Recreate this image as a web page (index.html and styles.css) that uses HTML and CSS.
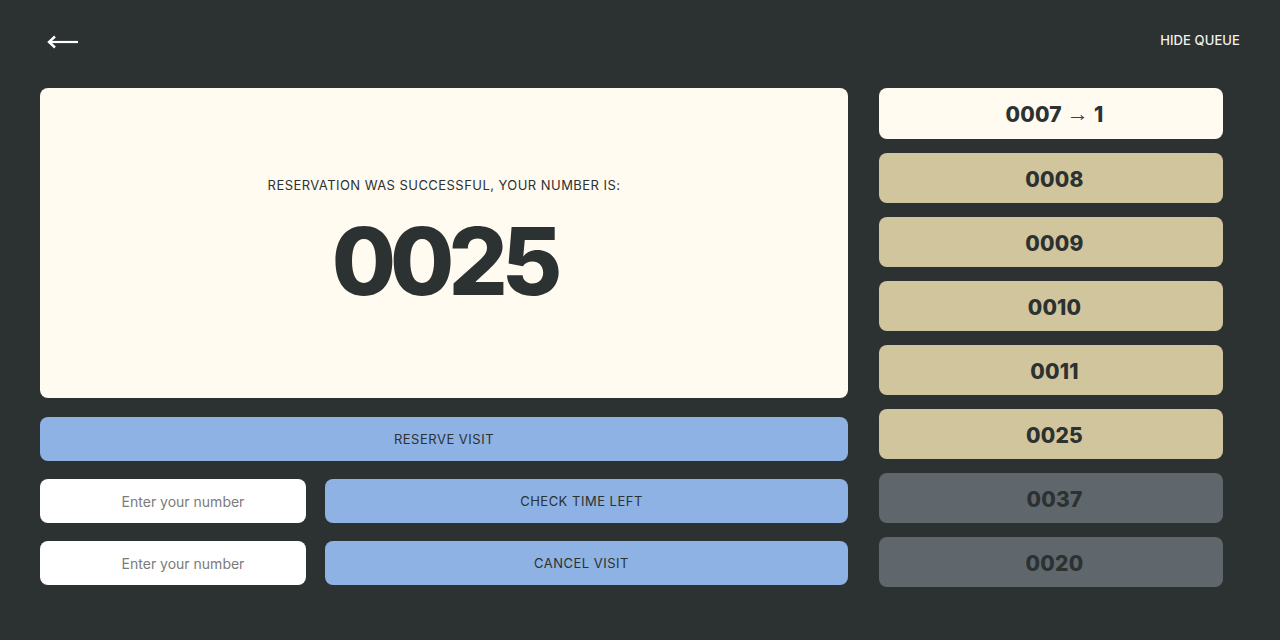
FILE: index.html
```html
<!DOCTYPE html>
<html lang="en">
<head>
<meta charset="utf-8">
<title>Queue</title>
<link rel="stylesheet" href="styles.css">
</head>
<body>
<header class="topbar">
  <button class="back" aria-label="Back">
    <svg width="32" height="14" viewBox="0 0 32 14"><path d="M2 7 H31" stroke="#fff" stroke-width="2.2" fill="none"/><path d="M8 1.5 L2 7 L8 12.5" stroke="#fff" stroke-width="2.4" fill="none" stroke-linejoin="miter"/></svg>
  </button>
  <button class="hide">HIDE QUEUE</button>
</header>
<main class="layout">
  <section class="left">
    <div class="card">
      <p class="label">RESERVATION WAS SUCCESSFUL, YOUR NUMBER IS:</p>
      <p class="big">0025</p>
    </div>
    <button class="btn full">RESERVE VISIT</button>
    <div class="row">
      <input class="field" placeholder="Enter your number">
      <button class="btn side">CHECK TIME LEFT</button>
    </div>
    <div class="row">
      <input class="field" placeholder="Enter your number">
      <button class="btn side">CANCEL VISIT</button>
    </div>
  </section>
  <aside class="queue">
    <div class="item current first">0007 <span class="arr">→</span> 1</div>
    <div class="item tan">0008</div>
    <div class="item tan">0009</div>
    <div class="item tan">0010</div>
    <div class="item tan">0011</div>
    <div class="item tan">0025</div>
    <div class="item gray">0037</div>
    <div class="item gray">0020</div>
  </aside>
</main>
</body>
</html>
```
FILE: styles.css
```css
* { box-sizing: border-box; }
html, body { margin: 0; }
body {
  background: #2c3131;
  font-family: Inter, "Noto Sans", sans-serif;
  color: #2c3131;
  width: 1280px;
  height: 640px;
  overflow: hidden;
}
.topbar {
  height: 88px;
  display: flex;
  justify-content: space-between;
  align-items: flex-start;
  padding: 0 40px 0 47px;
}
.back {
  background: none;
  border: 0;
  padding: 0;
  margin-top: 35px;
  cursor: pointer;
}
.back svg { display: block; }
.hide {
  background: none;
  border: 0;
  padding: 0;
  margin-top: 32px;
  color: #f3f3ee;
  font-family: Inter, sans-serif;
  font-size: 13px;
  font-weight: 500;
  letter-spacing: 0.1px;
}
.layout {
  display: grid;
  grid-template-columns: 808px 344px;
  column-gap: 31px;
  padding-left: 40px;
}
.left {
  display: flex;
  flex-direction: column;
}
.card {
  height: 310px;
  background: #fffbf1;
  border-radius: 8px;
  display: flex;
  flex-direction: column;
  align-items: center;
  padding-top: 89px;
}
.label {
  margin: 0;
  font-size: 13px;
  font-weight: 400;
  letter-spacing: 0.45px;
  color: #2c3131;
}
.big {
  margin: 14px 0 0;
  font-size: 93px;
  line-height: 108px;
  font-weight: 800;
  letter-spacing: -6px;
  color: #2c3131;
}
.btn {
  height: 44px;
  border: 0;
  border-radius: 8px;
  background: #8eb2e3;
  color: #2c3131;
  font-family: Inter, sans-serif;
  font-size: 13px;
  letter-spacing: 0.5px;
}
.side { padding: 0 10px 0 0; }
.full { margin-top: 19px; }
.row {
  display: grid;
  grid-template-columns: 266px 523px;
  column-gap: 19px;
  margin-top: 18px;
}
.field {
  height: 44px;
  border: 0;
  border-radius: 8px;
  background: #ffffff;
  text-align: center;
  padding: 0 0 0 20px;
  font-family: Inter, sans-serif;
  font-size: 14px;
  color: #2c3131;
}
.field::placeholder { color: #7b7b7b; }
.queue {
  display: flex;
  flex-direction: column;
  gap: 14px;
}
.item {
  height: 50px;
  border-radius: 8px;
  display: flex;
  align-items: center;
  justify-content: center;
  padding: 3px 0 0 7px;
  font-size: 21px;
  font-weight: 800;
  letter-spacing: 0.2px;
  color: #2c3131;
}
.first { height: 51px; padding-top: 1px; }
.current { background: #fffbf1; }
.arr {
  font-family: "Liberation Sans", sans-serif;
  font-weight: 400;
  font-size: 22px;
  margin: 0 5px;
  color: #3a3f3f;
}
.tan { background: #d1c59d; }
.gray { background: #5f676c; }
```
